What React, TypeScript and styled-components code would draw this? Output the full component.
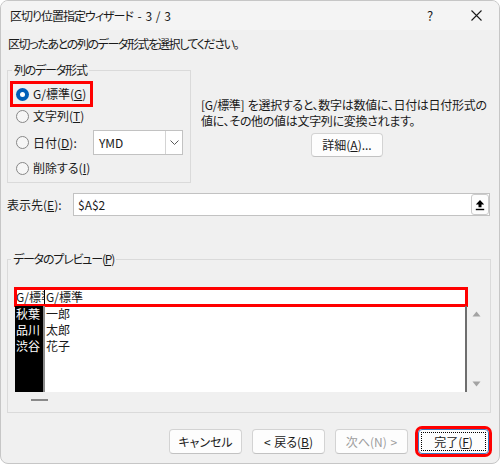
import React from "react";
import styled, { createGlobalStyle, css } from "styled-components";

const FONT = `"Noto Sans CJK JP", "Noto Sans", sans-serif`;

const Global = createGlobalStyle`
  html, body { margin: 0; padding: 0; background: #ffffff; }
  body { font-family: ${FONT}; font-size: 12px; color: #000; }
  * { box-sizing: border-box; }
`;

const Window = styled.div`
  width: 500px;
  height: 464px;
  background: #f0f0f0;
  border: 1px solid #c6c6c6;
  border-radius: 8px;
  overflow: hidden;
  display: flex;
  flex-direction: column;
  font-family: ${FONT};
  font-size: 12px;
  line-height: 16px;
  color: #1a1a1a;
  font-feature-settings: "palt";
  word-spacing: 1px;
  & button {
    font-feature-settings: "palt";
    word-spacing: 1px;
  }
`;

const TitleBar = styled.div`
  height: 29px;
  flex: none;
  display: flex;
  align-items: center;
  padding-left: 9px;
  background: #f4f4f4;
`;

const Title = styled.div`
  flex: 1;
  white-space: nowrap;
  letter-spacing: -1px;
  word-spacing: 3px;
`;

const TitleButton = styled.div`
  width: 46px;
  height: 29px;
  display: flex;
  align-items: center;
  justify-content: center;
  font-size: 13px;
`;

const Body = styled.div`
  flex: 1;
  display: flex;
  flex-direction: column;
  padding: 0 9px 0 6px;
`;

const Instruction = styled.div`
  margin-top: 6px;
  padding-left: 1px;
  white-space: nowrap;
  letter-spacing: -1.4px;
`;

const TopSection = styled.div`
  margin-top: 10px;
  display: flex;
  gap: 10px;
`;

const GroupBox = styled.fieldset<{ $width?: number }>`
  margin: 0;
  min-width: 0;
  border: 1px solid #dadada;
  flex: none;
  ${(p) => p.$width && css`width: ${p.$width}px;`}
`;

const FormatGroup = styled(GroupBox)`
  padding: 5px 7px 1px 8px;
  display: flex;
  flex-direction: column;
`;

const PreviewGroup = styled(GroupBox)`
  margin-top: 35px;
  margin-right: -1px;
  padding: 21px 5px 4px 7px;
`;

const Legend = styled.legend`
  padding: 0 2px;
  margin-left: -4px;
  line-height: 16px;
  white-space: nowrap;
  letter-spacing: -1.2px;
`;

const RadioRow = styled.div<{ $h: number; $mt?: number; $highlight?: boolean }>`
  display: flex;
  align-items: center;
  gap: 4px;
  height: ${(p) => p.$h}px;
  margin-top: ${(p) => p.$mt ?? 0}px;
  white-space: nowrap;
  ${(p) =>
    p.$highlight &&
    css`
      align-self: flex-start;
      margin: 1px 0 1px -3px;
      padding: 0 4px 0 3px;
      box-shadow: 0 0 0 3px #ff0000;
    `}
`;

const Radio = styled.span<{ $checked?: boolean }>`
  width: 13px;
  height: 13px;
  border-radius: 50%;
  flex: none;
  display: flex;
  align-items: center;
  justify-content: center;
  ${(p) =>
    p.$checked
      ? css`
          background: #005fb8;
          &::after {
            content: "";
            width: 5px;
            height: 5px;
            border-radius: 50%;
            background: #ffffff;
          }
        `
      : css`
          background: #f6f6f6;
          border: 1px solid #878787;
        `}
`;

const U = styled.u`
  text-decoration: underline;
  text-underline-offset: 1px;
`;

const Combo = styled.div`
  margin-left: auto;
  width: 90px;
  height: 25px;
  background: #ffffff;
  border: 1px solid #c2c2c2;
  display: flex;
  align-items: center;
`;

const ComboText = styled.span`
  flex: 1;
  padding-left: 5px;
`;

const ComboArrow = styled.span`
  width: 17px;
  height: 100%;
  border-left: 1px solid #d4d4d4;
  display: flex;
  align-items: center;
  justify-content: center;
`;

const Description = styled.div`
  flex: 1;
  margin-top: 35px;
  display: flex;
  flex-direction: column;
  align-items: flex-start;
`;

const DescLine = styled.div`
  white-space: nowrap;
  letter-spacing: -0.3px;
`;

const Button = styled.button<{ $w: number; $h?: number; $disabled?: boolean; $default?: boolean }>`
  width: ${(p) => p.$w}px;
  height: ${(p) => p.$h ?? 25}px;
  flex: none;
  font-family: ${FONT};
  font-size: 12px;
  line-height: 16px;
  color: ${(p) => (p.$disabled ? "#9d9d9d" : "#1a1a1a")};
  background: #fdfdfd;
  border: 1px solid #d3d3d3;
  border-bottom-color: #c2c2c2;
  border-radius: 4px;
  padding: 0;
  display: flex;
  align-items: center;
  justify-content: center;
  white-space: nowrap;
  ${(p) =>
    p.$default &&
    css`
      padding: 2px;
      outline: 3px solid #ff0000;
      border-color: #3b78c4;
    `}
`;

const FocusRing = styled.span`
  flex: 1;
  align-self: stretch;
  border: 1px dotted #000;
  display: flex;
  align-items: center;
  justify-content: center;
`;

const DetailButton = styled(Button)`
  margin-top: 4px;
  align-self: flex-start;
  margin-left: 110px;
`;

const DestRow = styled.div`
  margin-top: 10px;
  height: 23px;
  display: flex;
  align-items: center;
`;

const DestLabel = styled.div`
  width: 66px;
  flex: none;
  white-space: nowrap;
`;

const DestInput = styled.div`
  flex: 1;
  height: 23px;
  background: #ffffff;
  border: 1px solid #c2c2c2;
  display: flex;
  align-items: center;
  padding-left: 4px;
`;

const DestValue = styled.span`
  flex: 1;
`;

const RefButton = styled.span`
  width: 18px;
  height: 21px;
  border: 1px solid #cbcbcb;
  border-radius: 3px;
  background: #fdfdfd;
  display: flex;
  align-items: center;
  justify-content: center;
`;

const PreviewGrid = styled.div`
  height: 120px;
  display: grid;
  grid-template-columns: 1fr 18px;
  grid-template-rows: 1fr 16px;
`;

const DataArea = styled.div`
  display: flex;
  flex-direction: column;
  background: #ffffff;
  min-width: 0;
`;

const HeaderRow = styled.div`
  height: 18px;
  flex: none;
  display: flex;
  align-items: center;
  background: #ffffff;
  outline: 3px solid #ff0000;
  outline-offset: -2px;
`;

const HeaderCell = styled.div<{ $w?: number }>`
  height: 100%;
  display: flex;
  align-items: center;
  overflow: hidden;
  white-space: nowrap;
  padding-left: 1px;
  font-feature-settings: normal;
  ${(p) => (p.$w ? css`width: ${p.$w}px; flex: none; border-right: 1px solid #000;` : css`flex: 1;`)}
`;

const DataBody = styled.div`
  flex: 1;
  display: flex;
  border-right: 2px solid #6e6e6e;
`;

const DataColumn = styled.div<{ $selected?: boolean; $w?: number }>`
  display: flex;
  flex-direction: column;
  padding-left: 1px;
  ${(p) => (p.$w ? css`width: ${p.$w}px; flex: none;` : css`flex: 1;`)}
  ${(p) =>
    p.$selected &&
    css`
      background: #000000;
      color: #ffffff;
      border-right: 2px solid #8c8c8c;
    `}
`;

const DataCell = styled.div`
  height: 16px;
  line-height: 16px;
  white-space: nowrap;
`;

const VScroll = styled.div`
  padding-top: 18px;
  display: flex;
  flex-direction: column;
  justify-content: space-between;
  align-items: center;
`;

const ArrowBox = styled.div`
  height: 16px;
  display: flex;
  align-items: center;
  justify-content: center;
`;

const HScroll = styled.div`
  display: flex;
  align-items: center;
`;

const HThumb = styled.div`
  margin-left: 16px;
  width: 17px;
  height: 2px;
  background: #8a8a8a;
`;

const ButtonRow = styled.div`
  margin-top: 16px;
  margin-right: 1px;
  display: flex;
  justify-content: flex-end;
  gap: 10px;
`;

const Tri = ({ up }: { up?: boolean }) => (
  <svg width="9" height="6" viewBox="0 0 9 6">
    <polygon points={up ? "4.5,0.5 8.5,5.5 0.5,5.5" : "0.5,0.5 8.5,0.5 4.5,5.5"} fill="#a3a3a3" />
  </svg>
);

export default function App() {
  return (
    <>
      <Global />
      <Window>
        <TitleBar>
          <Title>区切り位置指定ウィザード - 3 / 3</Title>
          <TitleButton>?</TitleButton>
          <TitleButton>
            <svg width="11" height="11" viewBox="0 0 11 11">
              <path d="M0.5 0.5 L10.5 10.5 M10.5 0.5 L0.5 10.5" stroke="#1a1a1a" strokeWidth="1.1" />
            </svg>
          </TitleButton>
        </TitleBar>
        <Body>
          <Instruction>区切ったあとの列のデータ形式を選択してください。</Instruction>
          <TopSection>
            <FormatGroup $width={184}>
              <Legend>列のデータ形式</Legend>
              <RadioRow $h={20} $highlight>
                <Radio $checked />
                <span>
                  G/標準(<U>G</U>)
                </span>
              </RadioRow>
              <RadioRow $h={22}>
                <Radio />
                <span>
                  文字列(<U>T</U>)
                </span>
              </RadioRow>
              <RadioRow $h={25} $mt={3}>
                <Radio />
                <span>
                  日付(<U>D</U>):
                </span>
                <Combo>
                  <ComboText>YMD</ComboText>
                  <ComboArrow>
                    <svg width="9" height="5" viewBox="0 0 9 5">
                      <path d="M0.5 0.5 L4.5 4.5 L8.5 0.5" fill="none" stroke="#5a5a5a" strokeWidth="1" />
                    </svg>
                  </ComboArrow>
                </Combo>
              </RadioRow>
              <RadioRow $h={26}>
                <Radio />
                <span>
                  削除する(<U>I</U>)
                </span>
              </RadioRow>
            </FormatGroup>
            <Description>
              <DescLine>[G/標準] を選択すると、数字は数値に、日付は日付形式の</DescLine>
              <DescLine>値に、その他の値は文字列に変換されます。</DescLine>
              <DetailButton $w={72} $h={24}>
                詳細(<U>A</U>)...
              </DetailButton>
            </Description>
          </TopSection>
          <DestRow>
            <DestLabel>
              表示先(<U>E</U>):
            </DestLabel>
            <DestInput>
              <DestValue>$A$2</DestValue>
              <RefButton>
                <svg width="10" height="12" viewBox="0 0 10 12">
                  <polygon points="5,1 9.2,5.4 6.5,5.4 6.5,8.2 3.5,8.2 3.5,5.4 0.8,5.4" fill="#000" />
                  <rect x="0.8" y="9.8" width="8.4" height="1.4" fill="#000" />
                </svg>
              </RefButton>
            </DestInput>
          </DestRow>
          <PreviewGroup>
            <Legend>
              データのプレビュー(<U>P</U>)
            </Legend>
            <PreviewGrid>
              <DataArea>
                <HeaderRow>
                  <HeaderCell $w={30}>G/標準</HeaderCell>
                  <HeaderCell>G/標準</HeaderCell>
                </HeaderRow>
                <DataBody>
                  <DataColumn $selected $w={30}>
                    <DataCell>秋葉</DataCell>
                    <DataCell>品川</DataCell>
                    <DataCell>渋谷</DataCell>
                  </DataColumn>
                  <DataColumn>
                    <DataCell>一郎</DataCell>
                    <DataCell>太郎</DataCell>
                    <DataCell>花子</DataCell>
                  </DataColumn>
                </DataBody>
              </DataArea>
              <VScroll>
                <ArrowBox>
                  <Tri up />
                </ArrowBox>
                <ArrowBox>
                  <Tri />
                </ArrowBox>
              </VScroll>
              <HScroll>
                <HThumb />
              </HScroll>
            </PreviewGrid>
          </PreviewGroup>
          <ButtonRow>
            <Button $w={73}>キャンセル</Button>
            <Button $w={73}>
              &lt; 戻る(<U>B</U>)
            </Button>
            <Button $w={73} $disabled>
              次へ(N) &gt;
            </Button>
            <Button $w={71} $default>
              <FocusRing>
                完了(<U>F</U>)
              </FocusRing>
            </Button>
          </ButtonRow>
        </Body>
      </Window>
    </>
  );
}
